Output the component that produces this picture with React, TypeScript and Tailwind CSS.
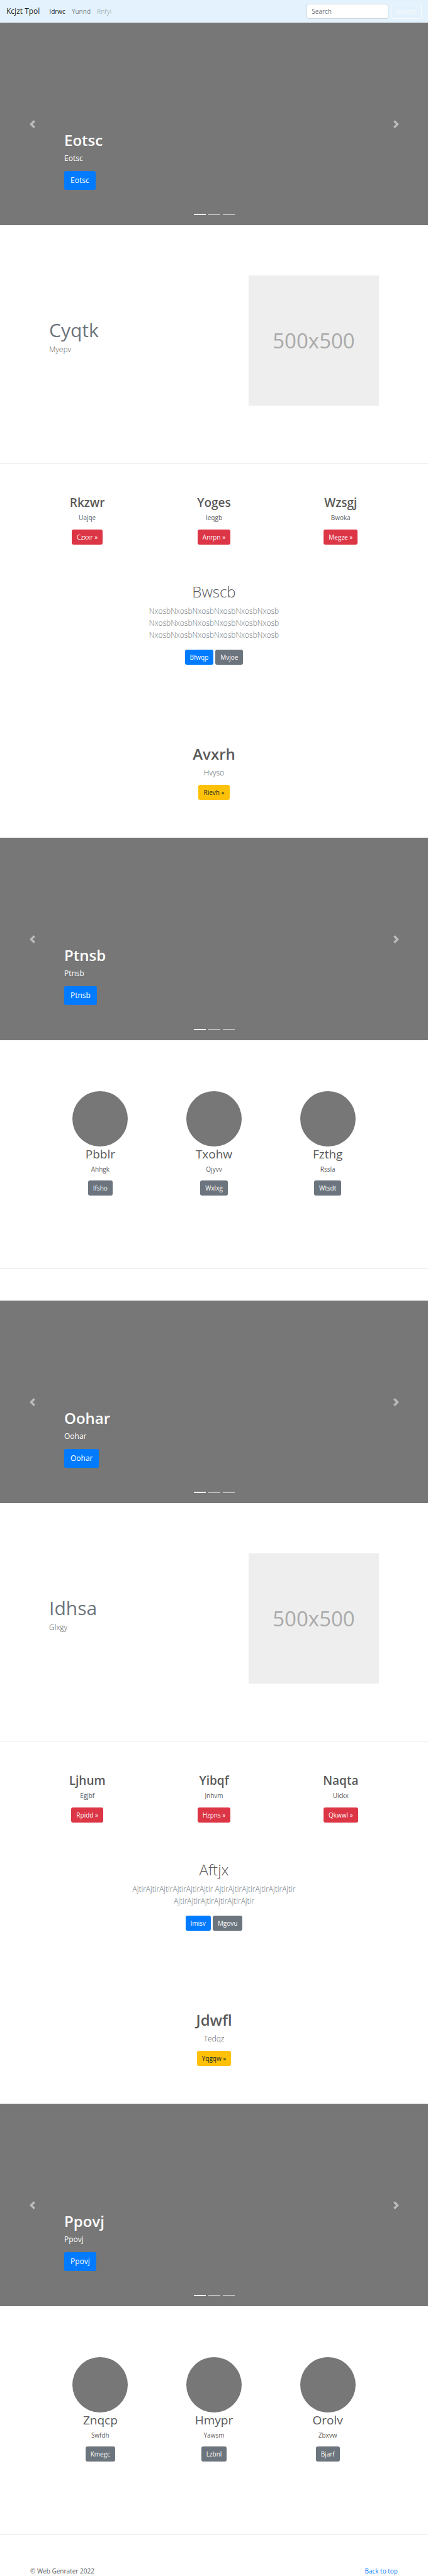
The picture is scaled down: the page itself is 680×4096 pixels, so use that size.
import type { ReactNode } from "react";

const navLinks = [
  { label: "Idrwc", tone: "text-black/90" },
  { label: "Yunnd", tone: "text-black/50" },
  { label: "Rnfyi", tone: "text-black/30" },
];

const buttonTones = {
  primary: "bg-[#007bff] text-white",
  secondary: "bg-[#6c757d] text-white",
  danger: "bg-[#dc3545] text-white",
  warning: "bg-[#ffc107] text-[#212529]",
};

function Button({ tone, children }: { tone: keyof typeof buttonTones; children: ReactNode }) {
  return (
    <button
      type="button"
      className={`h-6 rounded-[3px] px-2 text-[10px] leading-6 whitespace-nowrap ${buttonTones[tone]}`}
    >
      {children}
    </button>
  );
}

function Navbar() {
  return (
    <nav className="flex h-9 items-center bg-[#e3f2fd] px-[10px]">
      <a href="#" className="text-[12px] leading-5 text-black/90">
        Kcjzt Tpol
      </a>
      <ul className="ml-[15px] flex gap-[10px] text-[10px] leading-4">
        {navLinks.map((link) => (
          <li key={link.label}>
            <a href="#" className={link.tone}>
              {link.label}
            </a>
          </li>
        ))}
      </ul>
      <form className="ml-auto flex gap-[5px]">
        <input
          type="search"
          aria-label="Search"
          placeholder="Search"
          className="h-6 w-[130px] rounded-[3px] border border-[#ced4da] bg-white px-[7px] text-[10px] text-[#495057] placeholder:text-[#6c757d]"
        />
        <button
          type="button"
          className="h-6 rounded-[3px] border border-[#f8f9fa] px-[7px] text-[10px] text-[#f8f9fa]"
        >
          Search
        </button>
      </form>
    </nav>
  );
}

function Arrow({ direction }: { direction: "prev" | "next" }) {
  const isPrev = direction === "prev";
  return (
    <button
      type="button"
      aria-label={isPrev ? "Previous" : "Next"}
      className={`absolute inset-y-0 flex w-[15%] items-center justify-center opacity-50 ${isPrev ? "left-0" : "right-0"}`}
    >
      <svg viewBox="0 0 8 8" className="size-[13px] fill-white">
        {isPrev ? (
          <path d="M5.25 0l-4 4 4 4 1.5-1.5L4.25 4l2.5-2.5L5.25 0z" />
        ) : (
          <path d="M2.75 0l-1.5 1.5L3.75 4l-2.5 2.5L2.75 8l4-4-4-4z" />
        )}
      </svg>
    </button>
  );
}

function Carousel({ title }: { title: string }) {
  return (
    <section className="relative flex h-[322px] flex-col items-start justify-end bg-[#777] px-[15%] pb-14 text-white">
      <h1 className="mb-1 text-[24px] leading-[30px] font-semibold">{title}</h1>
      <p className="mb-[11px] text-[12px] leading-[19px]">{title}</p>
      <button type="button" className="h-[30px] rounded-[3px] bg-[#007bff] px-[10px] text-[12px]">
        {title}
      </button>
      <Arrow direction="prev" />
      <Arrow direction="next" />
      <div className="absolute inset-x-0 bottom-4 flex justify-center gap-1">
        <span className="h-0.5 w-[19px] bg-white" />
        <span className="h-0.5 w-[19px] bg-white/50" />
        <span className="h-0.5 w-[19px] bg-white/50" />
      </div>
    </section>
  );
}

function Divider() {
  return <hr className="border-t border-black/10" />;
}

function Featurette({ title, text }: { title: string; text: string }) {
  return (
    <section className="flex justify-between px-[78px] pt-20 pb-[91px]">
      <div className="pt-[68px]">
        <h2 className="mb-0.5 text-[30px] leading-[38px] text-[#6c757d]">{title}</h2>
        <p className="text-[12px] leading-[19px] font-light">{text}</p>
      </div>
      <div
        role="img"
        aria-label="500x500"
        className="flex size-[207px] items-center justify-center bg-[#eee] text-[33px] leading-none text-[#aaa]"
      >
        500x500
      </div>
    </section>
  );
}

type Item = { title: string; text: string; action: string };

function Columns({ items }: { items: Item[] }) {
  return (
    <section className="grid grid-cols-3 px-[38px] pt-[50px] text-center">
      {items.map((item) => (
        <div key={item.title}>
          <h2 className="mb-[5px] text-[19px] leading-6 font-semibold">{item.title}</h2>
          <p className="mb-[11px] text-[10px] leading-[15px]">{item.text}</p>
          <div className="flex justify-center">
            <Button tone="danger">{item.action} »</Button>
          </div>
        </div>
      ))}
    </section>
  );
}

function Intro({ title, text, actions }: { title: string; text: string; actions: [string, string] }) {
  return (
    <section className="mx-auto max-w-[320px] pt-[60px] text-center">
      <h1 className="mb-1.5 text-[24px] leading-[30px] font-light">{title}</h1>
      <p className="mb-[14px] text-[12px] leading-[19px] font-light text-[#6c757d]">{text}</p>
      <div className="flex justify-center gap-[3px]">
        <Button tone="primary">{actions[0]}</Button>
        <Button tone="secondary">{actions[1]}</Button>
      </div>
    </section>
  );
}

function CallToAction({ title, text, action }: Item) {
  return (
    <section className="pt-[127px] pb-[60px] text-center">
      <h1 className="mb-[5px] text-[24px] leading-[30px] font-semibold">{title}</h1>
      <p className="mb-[10px] text-[12px] leading-[19px] font-light">{text}</p>
      <div className="flex justify-center">
        <Button tone="warning">{action} »</Button>
      </div>
    </section>
  );
}

function Team({ items }: { items: Item[] }) {
  return (
    <section className="grid grid-cols-3 px-[69px] pt-[81px] pb-[116px] text-center">
      {items.map((item) => (
        <div key={item.title} className="flex flex-col items-center">
          <div className="size-[88px] rounded-full bg-[#777]" />
          <h2 className="mb-[5px] text-[19px] leading-6">{item.title}</h2>
          <p className="mb-[10px] text-[10px] leading-[15px]">{item.text}</p>
          <Button tone="secondary">{item.action}</Button>
        </div>
      ))}
    </section>
  );
}

export default function App() {
  return (
    <div className="bg-white font-['Open_Sans','Noto_Sans',sans-serif] text-[#5a5a5a]">
      <Navbar />
      <main>
        <Carousel title="Eotsc" />
        <Featurette title="Cyqtk" text="Myepv" />
        <Divider />
        <Columns
          items={[
            { title: "Rkzwr", text: "Uajqe", action: "Czxxr" },
            { title: "Yoges", text: "Ieqgb", action: "Anrpn" },
            { title: "Wzsgj", text: "Bwoka", action: "Megze" },
          ]}
        />
        <Intro
          title="Bwscb"
          text="NxosbNxosbNxosbNxosbNxosbNxosb NxosbNxosbNxosbNxosbNxosbNxosb NxosbNxosbNxosbNxosbNxosbNxosb"
          actions={["Bfwqp", "Mvjoe"]}
        />
        <CallToAction title="Avxrh" text="Hvyso" action="Rievh" />
        <Carousel title="Ptnsb" />
        <Team
          items={[
            { title: "Pbblr", text: "Ahhgk", action: "Ifsho" },
            { title: "Txohw", text: "Ojyvv", action: "Wxlxg" },
            { title: "Fzthg", text: "Rssla", action: "Wtsdt" },
          ]}
        />
        <Divider />
        <div className="pt-[50px]">
          <Carousel title="Oohar" />
        </div>
        <Featurette title="Idhsa" text="Glxgy" />
        <Divider />
        <Columns
          items={[
            { title: "Ljhum", text: "Egjbf", action: "Rpidd" },
            { title: "Yibqf", text: "Jnhvm", action: "Hzpns" },
            { title: "Naqta", text: "Uickx", action: "Qkwwl" },
          ]}
        />
        <Intro
          title="Aftjx"
          text="AjtirAjtirAjtirAjtirAjtirAjtir AjtirAjtirAjtirAjtirAjtirAjtir AjtirAjtirAjtirAjtirAjtirAjtir"
          actions={["Imisv", "Mgovu"]}
        />
        <CallToAction title="Jdwfl" text="Tedqz" action="Yqgqw" />
        <Carousel title="Ppovj" />
        <Team
          items={[
            { title: "Znqcp", text: "Swfdh", action: "Kmegc" },
            { title: "Hmypr", text: "Yawsm", action: "Lzbnl" },
            { title: "Orolv", text: "Zbxvw", action: "Bjarf" },
          ]}
        />
        <Divider />
      </main>
      <footer className="flex justify-between px-12 pt-[50px] text-[10px] leading-[15px]">
        <p>© Web Genrater 2022</p>
        <a href="#" className="text-[#007bff]">
          Back to top
        </a>
      </footer>
    </div>
  );
}
